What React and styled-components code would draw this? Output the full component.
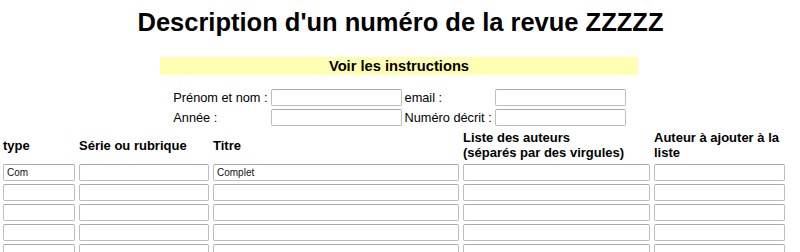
import React from "react";
import styled, { createGlobalStyle } from "styled-components";

const GlobalStyle = createGlobalStyle`
  html, body {
    margin: 0;
    padding: 0;
    background: #ffffff;
    overflow: hidden;
  }
  body {
    font-family: "Liberation Sans", Arial, sans-serif;
    color: #000;
  }
`;

const Page = styled.div`
  width: 800px;
  display: flex;
  flex-direction: column;
  align-items: stretch;
`;

const Title = styled.h1`
  margin: 7px 0 0;
  font-size: 25.5px;
  line-height: 30px;
  font-weight: bold;
  text-align: center;
  padding-left: 1px;
`;

const InstructionsBar = styled.div`
  align-self: center;
  margin: 20px 0 0 -2px;
  width: 478px;
  height: 18px;
  background: #ffffb4;
  font-weight: bold;
  font-size: 14.7px;
  line-height: 18px;
  text-align: center;
`;

const IdentityForm = styled.div`
  align-self: center;
  margin: 14px 0 0 -1px;
  display: grid;
  grid-template-columns: auto 131px auto 131px;
  column-gap: 3px;
  row-gap: 3px;
  align-items: center;
`;

const FieldLabel = styled.span`
  font-size: 12.75px;
  line-height: 17px;
  white-space: nowrap;
`;

const TextField = styled.input`
  box-sizing: border-box;
  width: ${(p) => p.$w || "100%"};
  height: 17px;
  margin: 0;
  padding: 0 3px;
  border: 1px solid #bdbdbd;
  border-top-color: #a9a9a9;
  border-radius: 2px;
  background: #fff;
  font-family: "Liberation Sans", Tahoma, sans-serif;
  font-size: 10px;
  color: #111;
  outline: none;
  appearance: none;
`;

const ArticleTable = styled.div`
  margin: 4px 0 0 3px;
  display: grid;
  grid-template-columns: 72px 130px 246px 187px 131px;
  column-gap: 4px;
  row-gap: 3px;
`;

const HeaderCell = styled.div`
  display: flex;
  align-items: center;
  min-height: 30px;
  font-size: 13px;
  line-height: 15px;
  font-weight: bold;
  margin-bottom: 1px;
`;

const headers = [
  "type",
  "Série ou rubrique",
  "Titre",
  ["Liste des auteurs", "(séparés par des virgules)"],
  ["Auteur à ajouter à la", "liste"],
];

const rows = [
  ["Com", "", "Complet", "", ""],
  ["", "", "", "", ""],
  ["", "", "", "", ""],
  ["", "", "", "", ""],
  ["", "", "", "", ""],
];

export default function App() {
  return (
    <Page>
      <GlobalStyle />
      <Title>Description d'un numéro de la revue ZZZZZ</Title>
      <InstructionsBar>Voir les instructions</InstructionsBar>
      <IdentityForm>
        <FieldLabel>Prénom et nom :</FieldLabel>
        <TextField readOnly value="" />
        <FieldLabel>email :</FieldLabel>
        <TextField readOnly value="" />
        <FieldLabel>Année :</FieldLabel>
        <TextField readOnly value="" />
        <FieldLabel>Numéro décrit :</FieldLabel>
        <TextField readOnly value="" />
      </IdentityForm>
      <ArticleTable>
        {headers.map((h, i) => (
          <HeaderCell key={"h" + i}>
            {Array.isArray(h) ? (
              <span>
                {h[0]}
                <br />
                {h[1]}
              </span>
            ) : (
              h
            )}
          </HeaderCell>
        ))}
        {rows.map((r, ri) =>
          r.map((v, ci) => <TextField key={ri + "-" + ci} readOnly value={v} />)
        )}
      </ArticleTable>
    </Page>
  );
}
